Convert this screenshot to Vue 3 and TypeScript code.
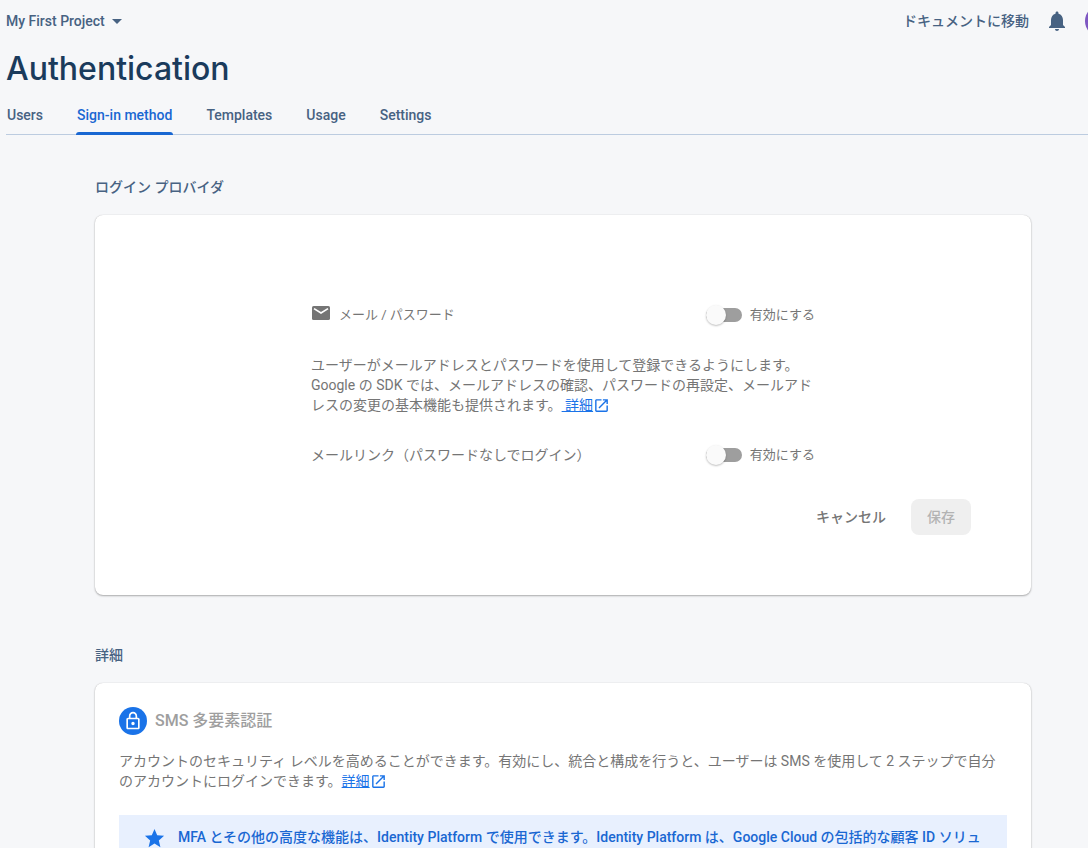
<script setup lang="ts">
import { ref } from 'vue'

const tabs: string[] = ['Users', 'Sign-in method', 'Templates', 'Usage', 'Settings']
const activeTab = ref('Sign-in method')
const passwordEnabled = ref(false)
const emailLinkEnabled = ref(false)
</script>

<template>
  <div class="page">
    <header class="topbar">
      <button class="project" type="button">
        My First Project
        <svg width="10" height="5" viewBox="0 0 10 5" aria-hidden="true"><path d="M0 0h10L5 5z" /></svg>
      </button>
      <div class="tools">
        <a class="docs" href="#">ドキュメントに移動</a>
        <button class="icon-button" type="button" aria-label="通知">
          <svg width="24" height="24" viewBox="0 0 24 24" aria-hidden="true">
            <path d="M12 22c1.1 0 2-.9 2-2h-4c0 1.1.89 2 2 2zm6-6v-5c0-3.07-1.64-5.64-4.5-6.32V4c0-.83-.67-1.5-1.5-1.5s-1.5.67-1.5 1.5v.68C7.63 5.36 6 7.92 6 11v5l-2 2v1h16v-1l-2-2z" />
          </svg>
        </button>
        <button class="avatar" type="button" aria-label="アカウント"></button>
      </div>
    </header>

    <h1>Authentication</h1>

    <nav class="tabs">
      <a
        v-for="tab in tabs"
        :key="tab"
        href="#"
        class="tab"
        :class="{ active: tab === activeTab }"
        @click.prevent="activeTab = tab"
      >{{ tab }}</a>
    </nav>

    <main>
      <h2>ログイン プロバイダ</h2>
      <section class="card provider">
        <form @submit.prevent>
          <div class="fields">
            <div class="row">
              <span class="name">
                <svg width="18" height="14" viewBox="0 0 18 14" aria-hidden="true">
                  <rect width="18" height="14" rx="1.6" fill="#757575" />
                  <path d="M2 2.6 9 7l7-4.400" fill="none" stroke="#fff" stroke-width="1.7" />
                </svg>
                メール / パスワード
              </span>
              <label class="switch">
                <input v-model="passwordEnabled" type="checkbox" role="switch" />
                有効にする
              </label>
            </div>
            <p>
              ユーザーがメールアドレスとパスワードを使用して登録できるようにします。 Google の SDK では、メールアドレスの確認、パスワードの再設定、メールアドレスの変更の基本機能も提供されます。<a class="more" href="#"><span>&nbsp;詳細</span><svg width="17" height="17" viewBox="0 0 24 24" aria-hidden="true"><path d="M19 19H5V5h7V3H5c-1.110 0-2 .9-2 2v14c0 1.100.89 2 2 2h14c1.100 0 2-.9 2-2v-7h-2v7zM14 3v2h3.590l-9.830 9.830 1.410 1.410L19 6.410V10h2V3h-7z" /></svg></a>
            </p>
            <div class="row">
              <span class="link-name">メールリンク（パスワードなしでログイン）</span>
              <label class="switch">
                <input v-model="emailLinkEnabled" type="checkbox" role="switch" />
                有効にする
              </label>
            </div>
          </div>
          <div class="actions">
            <button class="cancel" type="button">キャンセル</button>
            <button class="save" type="submit" disabled>保存</button>
          </div>
        </form>
      </section>

      <h2>詳細</h2>
      <section class="card advanced">
        <h3>
          <span class="badge">
            <svg width="20" height="20" viewBox="0 0 24 24" aria-hidden="true">
              <path d="M18 8h-1V6c0-2.760-2.240-5-5-5S7 3.240 7 6v2H6c-1.100 0-2 .9-2 2v10c0 1.100.9 2 2 2h12c1.100 0 2-.9 2-2V10c0-1.100-.9-2-2-2zM9 6c0-1.660 1.340-3 3-3s3 1.340 3 3v2H9V6zm9 14H6V10h12v10zm-6-3c1.100 0 2-.9 2-2s-.9-2-2-2-2 .9-2 2 .9 2 2 2z" />
            </svg>
          </span>
          SMS 多要素認証
        </h3>
        <p>
          アカウントのセキュリティ レベルを高めることができます。有効にし、統合と構成を行うと、ユーザーは SMS を使用して 2 ステップで自分のアカウントにログインできます。<a class="more" href="#"><span>詳細</span><svg width="17" height="17" viewBox="0 0 24 24" aria-hidden="true"><path d="M19 19H5V5h7V3H5c-1.110 0-2 .9-2 2v14c0 1.100.89 2 2 2h14c1.100 0 2-.9 2-2v-7h-2v7zM14 3v2h3.590l-9.830 9.830 1.410 1.410L19 6.410V10h2V3h-7z" /></svg></a>
        </p>
        <div class="banner">
          <svg width="23" height="23" viewBox="0 0 24 24" aria-hidden="true">
            <path d="M12 17.270 18.180 21l-1.640-7.030L22 9.240l-7.190-.61L12 2 9.190 8.630 2 9.240l5.460 4.730L5.820 21z" />
          </svg>
          <span>MFA とその他の高度な機能は、Identity Platform で使用できます。Identity Platform は、Google Cloud の包括的な顧客 ID ソリュ</span>
        </div>
      </section>
    </main>
  </div>
</template>

<style>
body {
  background: #f6f7f9;
}
</style>

<style scoped>
.page {
  box-sizing: border-box;
  height: 100vh;
  padding-left: 6px;
  overflow-x: hidden;
  overflow-y: auto;
  scrollbar-width: none;
  background: #f6f7f9;
  color: #757575;
  font-family: Roboto, "Noto Sans CJK JP", sans-serif;
  font-size: 14px;
  line-height: 20px;
}

button {
  padding: 0;
  border: 0;
  background: none;
  color: inherit;
  font: inherit;
}

a {
  color: inherit;
  text-decoration: none;
}

h1,
h2,
h3,
p {
  margin: 0;
}

.topbar {
  display: flex;
  justify-content: space-between;
  align-items: center;
  height: 42px;
  color: #476282;
  font-weight: 500;
}

.project {
  display: flex;
  align-items: center;
  gap: 7px;
}

.project svg,
.icon-button svg {
  display: block;
  fill: #476282;
}

.tools {
  display: flex;
  align-items: center;
  gap: 16px;
  margin-right: -29px;
}

.avatar {
  width: 32px;
  height: 32px;
  border-radius: 50%;
  background: #7e57c2;
}

h1 {
  color: #1a3b5c;
  font-family: Inter, sans-serif;
  font-size: 32px;
  font-weight: 500;
  line-height: 54px;
}

.tabs {
  display: flex;
  gap: 32px;
  border-bottom: 1px solid #bccce0;
  color: #476282;
  font-weight: 500;
}

.tab {
  display: flex;
  flex-direction: column;
  gap: 7px;
  margin-bottom: -1px;
  padding-top: 9px;
  text-align: center;
  min-width: 38px;
}

.tab::after {
  height: 3px;
  margin: 0 -1px;
  border-radius: 3px 3px 0 0;
  content: "";
}

.tabs {
  padding-left: 1px;
}

.tab {
  min-width: 0;
  margin-right: 2px;
}

.tab.active {
  color: #1967d2;
}

.tab.active::after {
  background: #1967d2;
}

main {
  margin: 0 57px 0 89px;
}

h2 {
  padding: 42px 0 18px;
  color: #476282;
  font-size: 14px;
  font-weight: 500;
  line-height: 20px;
}

.card {
  border-radius: 8px;
  background: #fff;
  box-shadow: 0 1px 2px rgba(0, 0, 0, 0.3), 0 0 1px rgba(0, 0, 0, 0.2);
}

.card + h2 {
  padding-top: 50px;
}

.provider {
  padding: 90px 60px 60px;
}

.fields {
  display: flex;
  flex-direction: column;
  gap: 30px;
  max-width: 504px;
  margin: 0 auto;
}

.row {
  display: flex;
  justify-content: space-between;
  align-items: center;
}

.name {
  display: flex;
  align-items: center;
  gap: 9px;
  padding-left: 1px;
  font-size: 13px;
}

.name svg {
  margin-bottom: 4px;
}

.switch {
  display: flex;
  align-items: center;
  gap: 8px;
  font-size: 13px;
}

.switch input {
  display: grid;
  align-items: center;
  width: 36px;
  height: 20px;
  margin: 0;
  appearance: none;
}

.switch input::before,
.switch input::after {
  grid-area: 1 / 1;
  content: "";
}

.switch input::before {
  height: 14px;
  border-radius: 7px;
  background: #9e9e9e;
}

.switch input::after {
  width: 20px;
  height: 20px;
  border-radius: 50%;
  background: #fafafa;
  box-shadow: 0 1px 2px rgba(0, 0, 0, 0.25);
}

.switch input:checked::after {
  justify-self: end;
  background: #1a73e8;
}

.more {
  color: #1a73e8;
  white-space: nowrap;
}

.more span {
  text-decoration: underline;
}

.more svg {
  vertical-align: -4px;
  fill: #1a73e8;
}

.actions {
  display: flex;
  justify-content: flex-end;
  gap: 9px;
  margin-top: 34px;
  font-weight: 500;
}

.actions button {
  height: 36px;
  padding: 0 16px;
  border-radius: 8px;
}

.save {
  background: #efefef;
  color: #b3b3b3;
}

.advanced {
  padding: 24px;
}

h3 {
  display: flex;
  align-items: center;
  gap: 8px;
  margin-bottom: 16px;
  color: #9e9e9e;
  font-size: 16px;
  font-weight: 500;
}

.badge {
  display: grid;
  place-items: center;
  width: 28px;
  height: 28px;
  border-radius: 50%;
  background: #1a73e8;
}

.badge svg {
  fill: #fff;
}

.banner {
  display: flex;
  align-items: flex-start;
  gap: 12px;
  margin-top: 24px;
  padding: 12px 24px;
  background: #e8f0fe;
  color: #1967d2;
  font-weight: 500;
}

.banner svg {
  flex: none;
  fill: #1a73e8;
}
</style>
